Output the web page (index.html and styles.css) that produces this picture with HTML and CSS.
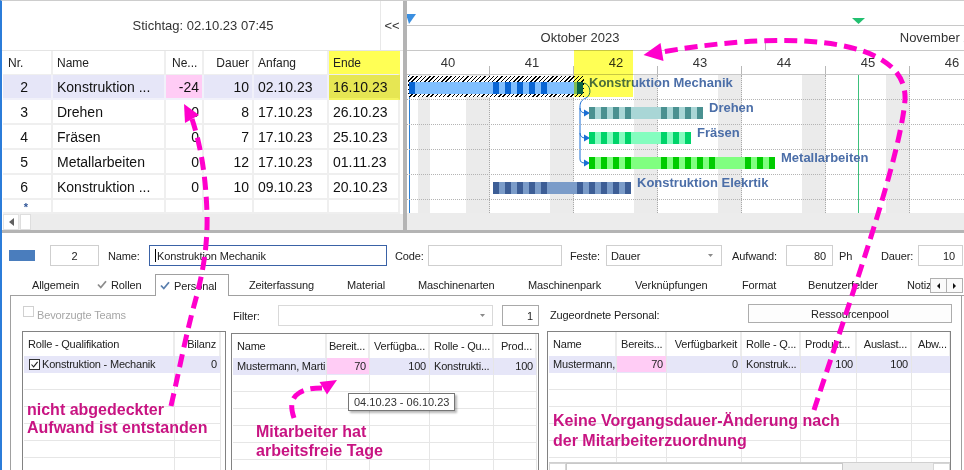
FILE: index.html
```html
<!DOCTYPE html>
<html lang="de">
<head>
<meta charset="utf-8">
<title>Projektplanung</title>
<link rel="stylesheet" href="styles.css">
</head>
<body>
<div class="app">
  <div class="top">
    <section class="table-pane">
      <div class="stichtag-bar">
        <div class="stichtag">Stichtag: 02.10.23 07:45</div>
        <div class="collapse">&lt;&lt;</div>
      </div>
      <div class="tgrid">
        <div class="trow thead">
          <div class="c nr">Nr.</div><div class="c name">Name</div><div class="c ne">Ne...</div><div class="c num">Dauer</div><div class="c">Anfang</div><div class="c hl">Ende</div>
        </div>
        <div class="trow sel">
          <div class="c nr">2</div><div class="c name">Konstruktion ...</div><div class="c num neg">-24</div><div class="c num">10</div><div class="c">02.10.23</div><div class="c hl">16.10.23</div>
        </div>
        <div class="trow">
          <div class="c nr">3</div><div class="c name">Drehen</div><div class="c num">0</div><div class="c num">8</div><div class="c">17.10.23</div><div class="c">26.10.23</div>
        </div>
        <div class="trow">
          <div class="c nr">4</div><div class="c name">Fräsen</div><div class="c num">0</div><div class="c num">7</div><div class="c">17.10.23</div><div class="c">25.10.23</div>
        </div>
        <div class="trow">
          <div class="c nr">5</div><div class="c name">Metallarbeiten</div><div class="c num">0</div><div class="c num">12</div><div class="c">17.10.23</div><div class="c">01.11.23</div>
        </div>
        <div class="trow">
          <div class="c nr">6</div><div class="c name">Konstruktion ...</div><div class="c num">0</div><div class="c num">10</div><div class="c">09.10.23</div><div class="c">20.10.23</div>
        </div>
        <div class="trow star">
          <div class="c nr"><span class="newrow">*</span></div><div class="c"></div><div class="c"></div><div class="c"></div><div class="c"></div><div class="c"></div>
        </div>
        <div class="hscroll">
          <span class="sb-btn"><svg width="5" height="8" viewBox="0 0 5 8"><polygon points="5,0 0,4 5,8" fill="#606060"/></svg></span>
          <span class="sb-thumb"></span>
        </div>
      </div>
    </section>

    <div class="vsplit"></div>

    <section class="gantt">
      <div class="g-band">
        <svg width="557" height="24" viewBox="0 0 557 24">
          <polygon points="-1,13 9,13 2,23" fill="#3b8fe0"/>
          <polygon points="445,17 458,17 451.5,23" fill="#22c070"/>
        </svg>
      </div>
      <div class="g-months">
        <div class="month" style="width:372px">Oktober 2023</div>
        <div class="month" style="width:360px">November 2023</div>
      </div>
      <div class="g-weeks">
        <div class="week">40</div><div class="week">41</div><div class="week">42</div><div class="week">43</div><div class="week">44</div><div class="week">45</div><div class="week">46</div>
      </div>
      <div class="g-body">
        <div class="g-days layer">
          <div class="gw"><span class="dy"></span><span class="dy off"></span><span class="dy"></span><span class="dy"></span><span class="dy"></span><span class="dy off"></span><span class="dy off"></span></div>
          <div class="gw"><span class="dy"></span><span class="dy"></span><span class="dy"></span><span class="dy"></span><span class="dy"></span><span class="dy off"></span><span class="dy off"></span></div>
          <div class="gw"><span class="dy"></span><span class="dy"></span><span class="dy"></span><span class="dy"></span><span class="dy"></span><span class="dy off"></span><span class="dy off"></span></div>
          <div class="gw"><span class="dy"></span><span class="dy"></span><span class="dy"></span><span class="dy"></span><span class="dy"></span><span class="dy off"></span><span class="dy off"></span></div>
          <div class="gw"><span class="dy"></span><span class="dy"></span><span class="dy"></span><span class="dy"></span><span class="dy"></span><span class="dy off"></span><span class="dy off"></span></div>
          <div class="gw"><span class="dy"></span><span class="dy"></span><span class="dy"></span><span class="dy"></span><span class="dy"></span><span class="dy off"></span><span class="dy off"></span></div>
          <div class="gw"><span class="dy"></span><span class="dy"></span><span class="dy"></span><span class="dy"></span><span class="dy"></span><span class="dy off"></span><span class="dy off"></span></div>
        </div>
        <div class="vline blue layer" style="margin-left:2px"></div>
        <div class="vline green layer" style="margin-left:451px"></div>
        <div class="g-rows layer">
          <div class="g-row">
            <div class="task" style="left:1px">
              <div class="hatch">
                <div class="bar mech"><span class="d"></span><span class="o"></span><span class="o"></span><span class="o"></span><span class="o"></span><span class="o"></span><span class="o"></span><span class="d"></span><span class="d"></span><span class="d"></span><span class="d"></span><span class="d"></span><span class="o"></span><span class="o"></span><span class="e"></span></div>
              </div>
              <span class="lbl lbl-first">Konstruktion Mechanik</span>
            </div>
          </div>
          <div class="g-row">
            <div class="task" style="left:182px">
              <div class="bar dreh"><span class="d"></span><span class="d"></span><span class="d"></span><span class="d"></span><span class="o"></span><span class="o"></span><span class="d"></span><span class="d"></span><span class="d"></span><span class="e"></span></div>
              <span class="lbl">Drehen</span>
            </div>
          </div>
          <div class="g-row">
            <div class="task" style="left:182px">
              <div class="bar fraes"><span class="d"></span><span class="d"></span><span class="d"></span><span class="d"></span><span class="o"></span><span class="o"></span><span class="d"></span><span class="d"></span><span class="e"></span></div>
              <span class="lbl">Fräsen</span>
            </div>
          </div>
          <div class="g-row">
            <div class="task" style="left:182px">
              <div class="bar metall"><span class="d"></span><span class="d"></span><span class="d"></span><span class="d"></span><span class="o"></span><span class="o"></span><span class="d"></span><span class="d"></span><span class="d"></span><span class="d"></span><span class="d"></span><span class="o"></span><span class="o"></span><span class="d"></span><span class="d"></span><span class="e"></span></div>
              <span class="lbl">Metallarbeiten</span>
            </div>
          </div>
          <div class="g-row">
            <div class="task" style="left:86px">
              <div class="bar elek"><span class="d"></span><span class="d"></span><span class="d"></span><span class="d"></span><span class="d"></span><span class="o"></span><span class="o"></span><span class="d"></span><span class="d"></span><span class="d"></span><span class="d"></span><span class="e"></span></div>
              <span class="lbl">Konstruktion Elekrtik</span>
            </div>
          </div>
        </div>
        <svg class="g-links layer" width="557" height="138" viewBox="0 0 557 138">
          <g fill="none" stroke="#1a6fd4" stroke-width="1">
            <path d="M177,8 C184,10 185,20 179,23 C174,25 173,28 173,32 L173,84 C173,87 175,88 178,88"/>
            <path d="M173,33 C173,36 175,38 178,38"/>
            <path d="M173,58 C173,61 175,63 178,63"/>
          </g>
          <g fill="#1a6fd4">
            <polygon points="177,34.5 183,38 177,41.5"/>
            <polygon points="177,59.5 183,63 177,66.5"/>
            <polygon points="177,84.5 183,88 177,91.5"/>
          </g>
        </svg>
      </div>
      <div class="g-scroll"></div>
      <div class="hl-week"></div>
    </section>
  </div>
  <div class="hsplit"></div>

  <div class="detail">
    <div class="form-row">
      <span class="swatch"></span>
      <span class="field f-nr">2</span>
      <span class="flabel l-name">Name:</span>
      <span class="field f-name"><span class="caret"></span>Konstruktion Mechanik</span>
      <span class="flabel l-code">Code:</span>
      <span class="field f-code"></span>
      <span class="flabel l-feste">Feste:</span>
      <span class="field f-feste">Dauer<svg class="dd" width="5" height="3" viewBox="0 0 5 3"><polygon points="0,0 5,0 2.5,3" fill="#8a8a8a"/></svg></span>
      <span class="flabel l-aufwand">Aufwand:</span>
      <span class="field f-aufwand">80</span>
      <span class="flabel l-ph">Ph</span>
      <span class="flabel l-dauer">Dauer:</span>
      <span class="field f-dauer">10</span>
    </div>

    <div class="tabs">
      <span class="tab t1">Allgemein</span>
      <span class="tab t2"><svg class="chk" width="10" height="9" viewBox="0 0 10 9"><path d="M1,4.5 L3.8,7.5 L9,1.2" fill="none" stroke="#8c8c8c" stroke-width="1.8"/></svg>Rollen</span>
      <span class="tab t3 sel"><svg class="chk" width="10" height="9" viewBox="0 0 10 9"><path d="M1,4.5 L3.8,7.5 L9,1.2" fill="none" stroke="#5a7fae" stroke-width="1.8"/></svg>Personal</span>
      <span class="tab t4">Zeiterfassung</span>
      <span class="tab t5">Material</span>
      <span class="tab t6">Maschinenarten</span>
      <span class="tab t7">Maschinenpark</span>
      <span class="tab t8">Verknüpfungen</span>
      <span class="tab t9">Format</span>
      <span class="tab t10">Benutzerfelder</span>
      <span class="tab t11">Notizen</span>
      <span class="tab-scroll">
        <span class="ts-btn"><svg width="3" height="6" viewBox="0 0 3 6"><polygon points="3,0 0,3 3,6" fill="#111"/></svg></span>
        <span class="ts-btn"><svg width="3" height="6" viewBox="0 0 3 6"><polygon points="0,0 3,3 0,6" fill="#111"/></svg></span>
      </span>
    </div>

    <div class="panel">
      <div class="pcol pc-left">
        <div class="ptop"><span class="cb-dis"></span><span class="muted">Bevorzugte Teams</span></div>
        <div class="dgrid g-left">
          <div class="grow h"><span class="gc">Rolle - Qualifikation</span><span class="gc r">Bilanz</span></div>
          <div class="grow sel"><span class="gc"><span class="cbx"><svg width="9" height="9" viewBox="0 0 9 9"><path d="M1.5,4.5 L3.6,6.8 L7.6,1.8" fill="none" stroke="#222" stroke-width="1.1"/></svg></span>Konstruktion - Mechanik</span><span class="gc r">0</span></div>
          <div class="grow"><span class="gc"></span><span class="gc"></span></div>
          <div class="grow"><span class="gc"></span><span class="gc"></span></div>
          <div class="grow"><span class="gc"></span><span class="gc"></span></div>
          <div class="grow"><span class="gc"></span><span class="gc"></span></div>
          <div class="grow"><span class="gc"></span><span class="gc"></span></div>
          <div class="grow"><span class="gc"></span><span class="gc"></span></div>
        </div>
      </div>

      <div class="pcol pc-mid">
        <div class="ptop">
          <span class="flabel l-filter">Filter:</span>
          <span class="field f-filter"><svg class="dd" width="5" height="3" viewBox="0 0 5 3"><polygon points="0,0 5,0 2.5,3" fill="#8a8a8a"/></svg></span>
          <span class="field f-one">1</span>
        </div>
        <div class="dgrid g-mid">
          <div class="grow h"><span class="gc">Name</span><span class="gc r">Bereit...</span><span class="gc">Verfügba...</span><span class="gc">Rolle - Qu...</span><span class="gc r">Prod...</span></div>
          <div class="grow sel"><span class="gc">Mustermann, Martin</span><span class="gc r pk">70</span><span class="gc r">100</span><span class="gc">Konstrukti...</span><span class="gc r">100</span></div>
          <div class="grow"><span class="gc"></span><span class="gc"></span><span class="gc"></span><span class="gc"></span><span class="gc"></span></div>
          <div class="grow"><span class="gc"></span><span class="gc"></span><span class="gc"></span><span class="gc"></span><span class="gc"></span></div>
          <div class="grow"><span class="gc"></span><span class="gc"></span><span class="gc"></span><span class="gc"></span><span class="gc"></span></div>
          <div class="grow"><span class="gc"></span><span class="gc"></span><span class="gc"></span><span class="gc"></span><span class="gc"></span></div>
          <div class="grow"><span class="gc"></span><span class="gc"></span><span class="gc"></span><span class="gc"></span><span class="gc"></span></div>
          <div class="grow"><span class="gc"></span><span class="gc"></span><span class="gc"></span><span class="gc"></span><span class="gc"></span></div>
        </div>
      </div>

      <div class="pcol pc-right">
        <div class="ptop">
          <span class="flabel l-zug">Zugeordnete Personal:</span>
          <span class="btn">Ressourcenpool</span>
        </div>
        <div class="dgrid g-right">
          <div class="gbody">
            <div class="grow h"><span class="gc">Name</span><span class="gc">Bereits...</span><span class="gc r">Verfügbarkeit</span><span class="gc">Rolle - Q...</span><span class="gc">Produkt...</span><span class="gc r">Auslast...</span><span class="gc abw">Abw...</span></div>
            <div class="grow sel"><span class="gc">Mustermann,</span><span class="gc r pk">70</span><span class="gc r">0</span><span class="gc">Konstruk...</span><span class="gc r">100</span><span class="gc r">100</span><span class="gc"></span></div>
            <div class="grow"><span class="gc"></span><span class="gc"></span><span class="gc"></span><span class="gc"></span><span class="gc"></span><span class="gc"></span><span class="gc"></span></div>
            <div class="grow"><span class="gc"></span><span class="gc"></span><span class="gc"></span><span class="gc"></span><span class="gc"></span><span class="gc"></span><span class="gc"></span></div>
            <div class="grow"><span class="gc"></span><span class="gc"></span><span class="gc"></span><span class="gc"></span><span class="gc"></span><span class="gc"></span><span class="gc"></span></div>
            <div class="grow"><span class="gc"></span><span class="gc"></span><span class="gc"></span><span class="gc"></span><span class="gc"></span><span class="gc"></span><span class="gc"></span></div>
            <div class="grow"><span class="gc"></span><span class="gc"></span><span class="gc"></span><span class="gc"></span><span class="gc"></span><span class="gc"></span><span class="gc"></span></div>
            <div class="grow"><span class="gc"></span><span class="gc"></span><span class="gc"></span><span class="gc"></span><span class="gc"></span><span class="gc"></span><span class="gc"></span></div>
          </div>
          <div class="gscroll">
            <span class="gs-btn"></span><span class="gs-thumb"></span><span class="gs-track"></span><span class="gs-btn"></span>
          </div>
        </div>
      </div>
    </div>
  </div>

  <div class="overlay">
    <div class="tooltip">04.10.23 - 06.10.23</div>
    <div class="note n1">nicht abgedeckter<br>Aufwand ist entstanden</div>
    <div class="note n2">Mitarbeiter hat<br>arbeitsfreie Tage</div>
    <div class="note n3">Keine Vorgangsdauer-Änderung nach<br>der Mitarbeiterzuordnung</div>
    <svg class="arrows" width="964" height="470" viewBox="0 0 964 470">
      <g fill="none" stroke="#ff00cc" stroke-width="5" stroke-dasharray="13 7">
        <path d="M171,406 C178,376 186,334 195,302 C201,280 208,250 207,214 C206,178 201,146 192,119"/>
        <path d="M294,418 C290,406 291,398 299,393 C305,389 313,388 322,388"/>
        <path d="M814,410 C850,300 900,160 905,100 C908,40 800,28 662,52"/>
      </g>
      <g fill="#ff00cc">
        <polygon points="184,104 199,115 185,123"/>
        <polygon points="337,380 327,394.5 319.5,382"/>
        <polygon points="643.5,55 663.5,61 660.5,43"/>
      </g>
    </svg>
  </div>
</div>
</body>
</html>
```

FILE: styles.css
```css
* { box-sizing: border-box; }
html, body { margin: 0; padding: 0; background: #fff; }
body {
  width: 964px; height: 470px; overflow: hidden;
  font-family: "Liberation Sans", Arial, sans-serif;
  color: #1e1e1e;
}
.app {
  position: relative; width: 964px; height: 470px; overflow: hidden;
  border-top: 1px solid #cdcdcd; border-left: 2px solid #2b7cd9;
}

/* ---------- top: table + gantt ---------- */
.top { display: flex; height: 229px; }
.table-pane { width: 401px; flex-shrink: 0; display: flex; flex-direction: column; }
.stichtag-bar {
  height: 50px; flex-shrink: 0; display: flex;
  border-bottom: 1px solid #e4e4e4; font-size: 13px; color: #333;
}
.stichtag { width: 378px; padding-left: 24px; display: flex; align-items: center; justify-content: center; }
.collapse { width: 23px; border-left: 1px solid #e8e8e8; display: flex; align-items: center; justify-content: center; }

.tgrid { margin-left: 1px; display: flex; flex-direction: column; }
.trow { display: grid; grid-template-columns: 50px 113px 38px 50px 75px 71px; height: 25px; font-size: 14px; color: #111; }
.trow.thead { height: 24px; font-size: 12px; color: #222; }
.trow.star { height: 14px; }
.c {
  border-right: 2px solid #efefef; border-bottom: 2px solid #efefef;
  padding: 0 4px; display: flex; align-items: center; white-space: nowrap; overflow: hidden;
}
.thead .c { border-bottom-width: 1px; }
.c.nr { justify-content: flex-end; padding-right: 23px; }
.thead .c.nr { justify-content: flex-start; padding-left: 5px; }
.c.num { justify-content: flex-end; padding-right: 3px; }
.thead .c.ne { padding-left: 6px; }
.sel .c { background: #e6e6f8; border-color: #f1f1fa; }
.sel .c.neg { background: #ffccf5; }
.thead .c.hl { background: #ffff55; border-right-color: #ffff55; }
.sel .c.hl { background: #e6e653; border-bottom-color: #f4f460; border-right-color: #e6e653; }
.newrow { font-size: 11px; font-weight: bold; color: #2f5597; margin-top: 2px; }
.hscroll { height: 16px; background: #ececec; display: flex; align-items: stretch; }
.sb-btn { width: 16px; background: #fff; border: 1px solid #e2e2e2; display: flex; align-items: center; justify-content: center; }
.sb-thumb { width: 11px; margin-left: 1px; background: #fff; border: 1px solid #dedede; }

.vsplit { width: 4px; flex-shrink: 0; background: #b4b4b4; }

.gantt { width: 557px; flex-shrink: 0; position: relative; overflow: hidden; display: flex; flex-direction: column; }
.g-band { height: 25px; flex-shrink: 0; border-bottom: 1px solid #c8c8c8; }
.g-band svg { display: block; overflow: visible; }
.g-months { height: 25px; flex-shrink: 0; display: flex; margin-left: -13px; border-bottom: 1px solid #c8c8c8; }
.month {
  flex-shrink: 0; position: relative; text-align: center; font-size: 13px; line-height: 24px;
  color: #333; white-space: nowrap;
}
.month::after { content: ""; position: absolute; right: 0; bottom: 0; width: 1px; height: 7px; background: #b8b8b8; }
.g-weeks { height: 24px; flex-shrink: 0; display: flex; margin-left: -1px; border-bottom: 1px solid #c8c8c8; }
.week { width: 84px; flex-shrink: 0; position: relative; text-align: center; font-size: 13px; line-height: 23px; color: #333; }
.week::after { content: ""; position: absolute; right: 0; bottom: 0; width: 1px; height: 8px; background: #b8b8b8; }

.g-body { height: 138px; flex-shrink: 0; display: grid; }
.g-body > .layer { grid-area: 1 / 1; }
.g-days { display: flex; margin-left: -1px; }
.gw { display: flex; width: 84px; flex-shrink: 0; position: relative; }
.gw::after { content: ""; position: absolute; right: 0; top: 0; bottom: 0; border-right: 1px dotted #a9a9a9; }
.dy { width: 12px; flex-shrink: 0; }
.dy.off { background: #ebebeb; }
.vline { width: 1px; justify-self: start; }
.vline.blue { background: #2a7fd4; }
.vline.green { background: #3cc07c; }
.g-rows { display: flex; flex-direction: column; }
.g-row { height: 25px; flex-shrink: 0; position: relative; border-bottom: 1px dotted #b4b4b4; }
.task { position: absolute; top: 0; display: flex; align-items: flex-start; }
.hatch {
  margin-top: 1px; padding: 6px 1px 3px;
  background: repeating-linear-gradient(-45deg, #000 0 1px, #fff 1px 3px);
}
.bar { display: flex; height: 12px; margin-top: 7px; }
.hatch .bar { margin-top: 0; }
.bar span { width: 12px; flex-shrink: 0; }
.bar .d { background: linear-gradient(to right, var(--dk) 0 6px, var(--lt) 6px 12px); }
.bar .o { background: var(--lt); }
.bar .e { width: 6px; background: var(--dk); }
.mech { --dk: #0a66d4; --lt: #80bfff; }
.dreh { --dk: #4a9191; --lt: #a9d6d6; }
.fraes { --dk: #00d46a; --lt: #84fdbf; }
.metall { --dk: #00cc00; --lt: #80ff80; }
.elek { --dk: #3d5e96; --lt: #7b9cc9; }
.lbl { font-weight: bold; font-size: 13px; line-height: 15px; color: #4b6ea8; margin-left: 6px; white-space: nowrap; }
.lbl-first { margin-left: 5px; }
.g-links { display: block; overflow: visible; }
.g-scroll { height: 17px; flex-shrink: 0; background: #ececec; }
.hl-week {
  position: absolute; left: 167px; top: 49px; width: 59px; height: 47px;
  background: #ffff55; mix-blend-mode: multiply;
}

.hsplit { height: 3px; background: #b4b4b4; }

/* ---------- detail ---------- */
.detail { font-size: 11px; color: #222; letter-spacing: -0.12px; }
.form-row { display: flex; align-items: center; height: 21px; margin-top: 12px; }
.swatch { margin-left: 7px; width: 26px; height: 11px; background: #4a7dbd; flex-shrink: 0; }
.field {
  height: 21px; border: 1px solid #cfcfcf; background: #fff; flex-shrink: 0;
  display: flex; align-items: center; padding: 0 5px; white-space: nowrap; overflow: hidden;
}
.flabel { flex-shrink: 0; white-space: nowrap; }
.f-nr { margin-left: 15px; width: 49px; justify-content: center; }
.l-name { margin-left: 9px; width: 41px; }
.f-name { width: 238px; border-color: #3a62a6; }
.caret { width: 1px; height: 13px; background: #000; margin-right: 1px; }
.l-code { margin-left: 8px; width: 33px; }
.f-code { width: 134px; }
.l-feste { margin-left: 8px; width: 36px; }
.f-feste { width: 116px; padding-left: 4px; }
.dd { margin-left: auto; margin-right: 3px; }
.l-aufwand { margin-left: 10px; width: 54px; }
.f-aufwand { width: 47px; justify-content: flex-end; padding-right: 6px; }
.l-ph { margin-left: 6px; width: 42px; }
.l-dauer { width: 37px; }
.f-dauer { width: 45px; justify-content: flex-end; padding-right: 7px; }

.tabs {
  display: flex; height: 22px; margin-top: 8px; margin-left: 8px;
  border-bottom: 1px solid #a0a0a0;
}
.tab { flex-shrink: 0; display: flex; align-items: center; padding-left: 17px; white-space: nowrap; overflow: hidden; }
.tab.sel { height: 22px; border: 1px solid #a0a0a0; border-bottom: 0; background: #fff; padding-left: 4px; }
.chk { margin-right: 4px; flex-shrink: 0; }
.t1 { width: 76px; padding-left: 22px; }
.t2 { width: 69px; padding-left: 11px; }
.t3 { width: 74px; }
.t4 { width: 101px; padding-left: 20px; }
.t5 { width: 70px; }
.t6 { width: 109px; padding-left: 18px; }
.t7 { width: 108px; padding-left: 19px; }
.t8 { width: 108px; padding-left: 18px; }
.t9 { width: 65px; }
.t10 { width: 101px; padding-left: 18px; }
.t11 { width: 39px; padding-left: 16px; }
.tab-scroll { display: flex; align-self: center; margin-top: 2px; }
.ts-btn {
  width: 17px; height: 15px; border: 1px solid #b0b0b0; background: #fafafa;
  display: flex; align-items: center; justify-content: center;
}
.ts-btn + .ts-btn { margin-left: -1px; }

.panel {
  display: flex; margin-left: 8px; width: 952px; height: 180px;
  border-left: 1px solid #a0a0a0; border-right: 1px solid #a0a0a0;
  padding-top: 9px;
}
.pcol { display: flex; flex-direction: column; flex-shrink: 0; }
.pc-left { margin-left: 11px; width: 204px; }
.pc-mid { margin-left: 5px; width: 308px; }
.pc-right { margin-left: 8px; width: 404px; }
.ptop { height: 21px; display: flex; align-items: center; }
.cb-dis { width: 11px; height: 11px; border: 1px solid #d0d0d0; background: #fff; margin-left: 1px; margin-top: -6px; }
.muted { color: #a6a6a6; margin-left: 3px; }
.l-filter { width: 47px; padding-left: 2px; }
.f-filter { width: 215px; border-color: #d9d9d9; }
.f-filter .dd { margin-right: 2px; }
.f-one { width: 37px; margin-left: 9px; border-color: #a9a9a9; justify-content: flex-end; padding-right: 5px; }
.l-zug { padding-left: 3px; }
.btn {
  margin-left: auto; margin-right: -1px; width: 204px; height: 19px; margin-top: -2px;
  border: 1px solid #adadad; background: #fdfdfd;
  display: flex; align-items: center; justify-content: center;
}

.dgrid { margin-top: 7px; border: 1px solid #828282; padding-left: 1px; height: 160px; overflow: hidden; }
.grow { display: grid; height: 17px; }
.grow.h { height: 24px; }
.grow.sel { height: 17px; }
.g-left .grow { grid-template-columns: 151px 46px; }
.g-mid .grow { grid-template-columns: 94px 43px 60px 64px 43px; }
.g-right .grow { grid-template-columns: 68px 50px 75px 59px 56px 55px 39px; }
.gc {
  border-right: 1px solid #e6e6e6; border-bottom: 1px solid #e6e6e6;
  padding: 0 4px; display: flex; align-items: center; white-space: nowrap; overflow: hidden;
  letter-spacing: -0.2px;
}
.h .gc { border-bottom: 0; border-right: 2px solid #ececec; }
.gc.r { justify-content: flex-end; padding-right: 3px; }
.sel .gc { background: #e6e6f8; border-bottom-color: #e6e6f8; }
.sel .gc.pk { background: #ffccf5; }
.gc.abw { padding-left: 6px; }
.cbx {
  width: 11px; height: 11px; border: 1px solid #333; background: #fff; margin-left: 1px; margin-right: 2px;
  display: flex; align-items: center; justify-content: center; flex-shrink: 0;
}
.cbx svg { display: block; }
.g-right { display: flex; flex-direction: column; }
.gbody { height: 130px; flex-shrink: 0; overflow: hidden; }
.gscroll { height: 17px; display: flex; border-top: 1px solid #d0d0d0; background: #ececec; }
.gs-btn { width: 17px; background: #fff; border: 1px solid #d6d6d6; }
.gs-thumb { width: 277px; background: #fff; border: 1px solid #c8c8c8; }
.gs-track { flex: 1; }

/* ---------- overlay annotations ---------- */
.overlay { position: absolute; left: -2px; top: -1px; width: 964px; height: 470px; pointer-events: none; }
.tooltip {
  position: absolute; left: 348px; top: 393px; height: 18px; padding: 0 5px;
  border: 1px solid #767676; background: #fff; font-size: 11px; line-height: 16px; color: #333;
  box-shadow: 2px 2px 2px rgba(0,0,0,0.28); white-space: nowrap;
}
.note {
  position: absolute; font-weight: bold; font-size: 16px; line-height: 19px; color: #c81482; white-space: nowrap;
}
.n1 { left: 27px; top: 401px; line-height: 18px; }
.n2 { left: 256px; top: 422px; }
.n3 { left: 553px; top: 411px; line-height: 20px; }
.arrows { position: absolute; left: 0; top: 0; }
```
